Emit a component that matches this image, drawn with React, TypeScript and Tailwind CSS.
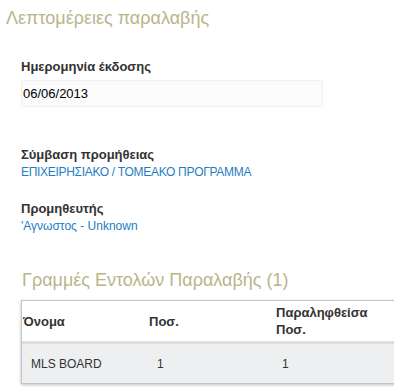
import React from "react";

const rows = [{ name: "MLS BOARD", qty: "1", received: "1" }];

export default function App() {
  return (
    <div className="w-[394px] h-[387px] overflow-hidden bg-white font-['Liberation_Sans',Arial,sans-serif] text-[#333]">
      <h1 className="pl-[6px] pt-[6px] text-[18px] leading-[24px] text-[#b9b58a]">Λεπτομέρειες παραλαβής</h1>

      <div className="pl-[21px] pt-[29px]">
        <p className="text-[13px] leading-[16px] font-bold">Ημερομηνία έκδοσης</p>
        <div className="mt-[5px] w-[302px] h-[27px] bg-[#fbfbfb] border border-[#f0f0f0] flex items-center pl-[1px] text-[13px] text-black">
          06/06/2013
        </div>

        <p className="mt-[40px] text-[13px] leading-[16px] font-bold">Σύμβαση προμήθειας</p>
        <p className="mt-[2px] text-[12px] leading-[14px] tracking-[-0.3px] text-[#1f7dc4]">ΕΠΙΧΕΙΡΗΣΙΑΚΟ / ΤΟΜΕΑΚΟ ΠΡΟΓΡΑΜΜΑ</p>

        <p className="mt-[22px] text-[13px] leading-[16px] font-bold">Προμηθευτής</p>
        <p className="mt-[2px] text-[12px] leading-[14px] text-[#1f7dc4]">'Αγνωστος - Unknown</p>
      </div>

      <h2 className="pl-[22px] mt-[35px] text-[18px] leading-[24px] text-[#b9b58a]">Γραμμές Εντολών Παραλαβής (1)</h2>

      <div className="ml-[21px] mt-[8px] w-[400px] border border-[#c4c4c4] shadow-[0_1px_3px_rgba(0,0,0,0.25)]">
        <div className="flex h-[43px] items-center bg-white border-b-[3px] border-[#dedede] text-[13px] leading-[17px] font-bold">
          <div className="w-[127px] pl-[1px]">Όνομα</div>
          <div className="w-[127px]">Ποσ.</div>
          <div className="w-[110px]">Παραληφθείσα<br />Ποσ.</div>
        </div>
        {rows.map((r, i) => (
          <div key={i} className="flex h-[39px] items-center bg-[#eeeff0] text-[12px]">
            <div className="w-[127px] pl-[9px]">{r.name}</div>
            <div className="w-[127px] pl-[8px]">{r.qty}</div>
            <div className="w-[110px] pl-[6px]">{r.received}</div>
          </div>
        ))}
      </div>
    </div>
  );
}
